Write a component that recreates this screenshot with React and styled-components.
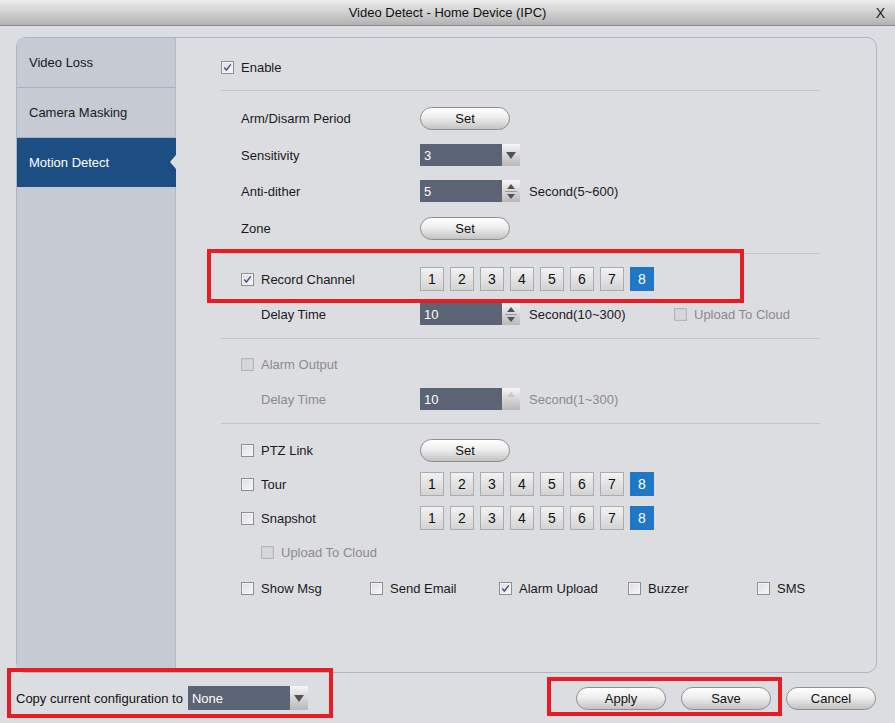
import React from "react";
import styled, { createGlobalStyle } from "styled-components";

const GlobalStyle = createGlobalStyle`
  html, body {
    margin: 0;
    padding: 0;
    background: #dcdde1;
  }
  * {
    box-sizing: border-box;
  }
  body {
    font-family: "Liberation Sans", Arial, sans-serif;
    font-size: 13px;
    color: #1a1a1a;
  }
`;

const Window = styled.div`
  position: relative;
  width: 895px;
  height: 723px;
  display: flex;
  flex-direction: column;
  background: #dcdde1;
  overflow: hidden;
`;

const TitleBar = styled.div`
  height: 26px;
  display: grid;
  grid-template-columns: 1fr auto 1fr;
  align-items: center;
  background: linear-gradient(#ececec, #b3b3b3);
  border-bottom: 1px solid #8c8c8c;
`;

const Title = styled.div`
  grid-column: 2;
  font-size: 13px;
  color: #111;
`;

const Close = styled.div`
  justify-self: end;
  padding-right: 10px;
  font-size: 14px;
  color: #222;
`;

const Body = styled.div`
  padding: 11px 18px 0 16px;
`;

const Panel = styled.div`
  display: flex;
  height: 636px;
  border: 1px solid #aeb5c3;
  border-radius: 10px;
  overflow: hidden;
  background: #dcdde1;
`;

const Sidebar = styled.div`
  width: 159px;
  flex-shrink: 0;
  background: #c5cad3;
  border-right: 1px solid #b3b9c5;
`;

const SideItem = styled.div`
  position: relative;
  height: ${(p) => (p.$active ? "49px" : "50px")};
  display: flex;
  align-items: center;
  padding-left: 12px;
  font-size: 13px;
  white-space: nowrap;
  color: ${(p) => (p.$active ? "#fff" : "#1a1a1a")};
  background: ${(p) => (p.$active ? "#1d4e83" : "transparent")};
  border-bottom: ${(p) => (p.$active ? "none" : "1px solid #aab0bc")};
  margin-right: ${(p) => (p.$active ? "-1px" : "0")};

  &::after {
    content: "";
    display: ${(p) => (p.$active ? "block" : "none")};
    position: absolute;
    right: 0;
    top: 17px;
    border-top: 7px solid transparent;
    border-bottom: 7px solid transparent;
    border-right: 6px solid #dcdde1;
  }
`;

const Content = styled.div`
  flex: 1;
  min-width: 0;
  padding: 17px 56px 0 45px;
`;

const Row = styled.div`
  height: 24px;
  margin-top: ${(p) => p.$mt || 0}px;
  display: flex;
  align-items: center;
  white-space: nowrap;
`;

const Divider = styled.div`
  height: 1px;
  margin-top: ${(p) => p.$mt || 0}px;
  background: #c3c4c8;
`;

const Label = styled.div`
  width: ${(p) => (p.$w !== undefined ? p.$w : 199)}px;
  flex-shrink: 0;
  padding-left: ${(p) => p.$indent || 0}px;
  display: flex;
  align-items: center;
  gap: 7px;
  color: ${(p) => (p.$disabled ? "#8b8b8b" : "#1a1a1a")};
`;

const CheckItem = styled.div`
  width: ${(p) => (p.$w ? `${p.$w}px` : "auto")};
  flex-shrink: 0;
  display: flex;
  align-items: center;
  gap: 7px;
  color: ${(p) => (p.$disabled ? "#8b8b8b" : "#1a1a1a")};
`;

const Box = styled.span`
  width: 13px;
  height: 13px;
  display: inline-flex;
  align-items: center;
  justify-content: center;
  flex-shrink: 0;
  border: 1px solid ${(p) => (p.$disabled ? "#b6b7ba" : "#8e8f92")};
  background: ${(p) =>
    p.$disabled
      ? "#d6d7da"
      : "linear-gradient(135deg, #dcdde0, #f8f8f8)"};
  box-shadow: inset 0 0 0 1px ${(p) => (p.$disabled ? "#cfd0d3" : "#f3f3f3")};
`;

const Checkbox = ({ checked, disabled }) => (
  <Box $disabled={disabled}>
    {checked && (
      <svg width="9" height="9" viewBox="0 0 9 9">
        <path
          d="M1.2 4.6 L3.4 7 L7.8 1.4"
          fill="none"
          stroke="#41559a"
          strokeWidth="1.5"
        />
      </svg>
    )}
  </Box>
);

const PillButton = styled.button`
  width: ${(p) => p.$w || 90}px;
  height: 23px;
  flex-shrink: 0;
  border: 1px solid #8e8e8e;
  border-radius: 12px;
  background: linear-gradient(#ffffff 0%, #eeeeee 45%, #c3c3c3 100%);
  font-family: "Liberation Sans", Arial, sans-serif;
  font-size: 13px;
  color: #111;
  padding: 0;
`;

const Field = styled.div`
  width: ${(p) => p.$w || 100}px;
  height: ${(p) => p.$h || 22}px;
  flex-shrink: 0;
  display: flex;
  background: #5b6475;
`;

const FieldText = styled.div`
  flex: 1;
  display: flex;
  align-items: center;
  padding-left: 4px;
  color: #fff;
  font-size: 13px;
`;

const ArrowPart = styled.div`
  width: 18px;
  display: flex;
  flex-direction: column;
  align-items: center;
  justify-content: center;
  gap: ${(p) => p.$gap || 0}px;
  background: linear-gradient(#f5f5f5, #b8b8b8);
`;

const Down = styled.span`
  width: 0;
  height: 0;
  border-left: ${(p) => p.$s || 5}px solid transparent;
  border-right: ${(p) => p.$s || 5}px solid transparent;
  border-top: ${(p) => (p.$s ? p.$s + 1 : 7)}px solid
    ${(p) => (p.$disabled ? "#c9c9c9" : "#4f5358")};
`;

const Up = styled.span`
  width: 0;
  height: 0;
  border-left: 4px solid transparent;
  border-right: 4px solid transparent;
  border-bottom: 5px solid ${(p) => (p.$disabled ? "#c9c9c9" : "#4f5358")};
`;

const SpinSep = styled.span`
  width: 12px;
  height: 1px;
  background: ${(p) => (p.$disabled ? "#d4d4d4" : "#9a9a9a")};
`;

const Select = ({ value, w, h }) => (
  <Field $w={w} $h={h}>
    <FieldText>{value}</FieldText>
    <ArrowPart>
      <Down />
    </ArrowPart>
  </Field>
);

const Spinner = ({ value, disabled }) => (
  <Field $w={100}>
    <FieldText>{value}</FieldText>
    <ArrowPart $gap={2}>
      <Up $disabled={disabled} />
      <SpinSep $disabled={disabled} />
      <Down $s={4} $disabled={disabled} />
    </ArrowPart>
  </Field>
);

const Unit = styled.div`
  width: ${(p) => (p.$w ? `${p.$w}px` : "auto")};
  flex-shrink: 0;
  margin-left: 9px;
  color: ${(p) => (p.$disabled ? "#8b8b8b" : "#1a1a1a")};
`;

const Channels = styled.div`
  display: flex;
  gap: 6px;
`;

const Channel = styled.div`
  width: 24px;
  height: 24px;
  display: flex;
  align-items: center;
  justify-content: center;
  font-size: 14px;
  color: ${(p) => (p.$on ? "#fff" : "#111")};
  background: ${(p) =>
    p.$on ? "#1f77c6" : "linear-gradient(#f2f2f2, #d3d3d3)"};
  border: 1px solid ${(p) => (p.$on ? "#1f77c6" : "#acacac")};
`;

const ChannelSet = () => (
  <Channels>
    {[1, 2, 3, 4, 5, 6, 7, 8].map((n) => (
      <Channel key={n} $on={n === 8}>
        {n}
      </Channel>
    ))}
  </Channels>
);

const Footer = styled.div`
  flex: 1;
  display: flex;
  align-items: center;
  padding: 0 19px 0 16px;
`;

const CopyLabel = styled.div`
  margin-right: 5px;
  color: #111;
`;

const FooterButtons = styled.div`
  margin-left: auto;
  display: flex;
  gap: 15px;
`;

const Marker = styled.div`
  position: absolute;
  left: ${(p) => p.$x}px;
  top: ${(p) => p.$y}px;
  width: ${(p) => p.$w}px;
  height: ${(p) => p.$h}px;
  border: 4px solid #e81c24;
  pointer-events: none;
`;

const bottomChecks = [
  ["Show Msg", false],
  ["Send Email", false],
  ["Alarm Upload", true],
  ["Buzzer", false],
  ["SMS", false],
];

export default function App() {
  return (
    <Window>
      <GlobalStyle />
      <TitleBar>
        <Title>Video Detect - Home Device (IPC)</Title>
        <Close>X</Close>
      </TitleBar>

      <Body>
        <Panel>
          <Sidebar>
            <SideItem>Video Loss</SideItem>
            <SideItem>Camera Masking</SideItem>
            <SideItem $active>Motion Detect</SideItem>
          </Sidebar>

          <Content>
            <Row>
              <CheckItem>
                <Checkbox checked />
                Enable
              </CheckItem>
            </Row>
            <Divider $mt={11} />

            <Row $mt={15}>
              <Label $indent={20}>Arm/Disarm Period</Label>
              <PillButton>Set</PillButton>
            </Row>
            <Row $mt={13}>
              <Label $indent={20}>Sensitivity</Label>
              <Select value="3" />
            </Row>
            <Row $mt={12}>
              <Label $indent={20}>Anti-dither</Label>
              <Spinner value="5" />
              <Unit>Second(5~600)</Unit>
            </Row>
            <Row $mt={13}>
              <Label $indent={20}>Zone</Label>
              <PillButton>Set</PillButton>
            </Row>
            <Divider $mt={13} />

            <Row $mt={13}>
              <Label $indent={20}>
                <Checkbox checked />
                Record Channel
              </Label>
              <ChannelSet />
            </Row>
            <Row $mt={11}>
              <Label $indent={40}>Delay Time</Label>
              <Spinner value="10" />
              <Unit $w={145}>Second(10~300)</Unit>
              <CheckItem $disabled>
                <Checkbox disabled />
                Upload To Cloud
              </CheckItem>
            </Row>
            <Divider $mt={12} />

            <Row $mt={13}>
              <Label $indent={20} $disabled>
                <Checkbox disabled />
                Alarm Output
              </Label>
            </Row>
            <Row $mt={11}>
              <Label $indent={40} $disabled>
                Delay Time
              </Label>
              <Spinner value="10" disabled />
              <Unit $disabled>Second(1~300)</Unit>
            </Row>
            <Divider $mt={12} />

            <Row $mt={14}>
              <Label $indent={20}>
                <Checkbox />
                PTZ Link
              </Label>
              <PillButton>Set</PillButton>
            </Row>
            <Row $mt={10}>
              <Label $indent={20}>
                <Checkbox />
                Tour
              </Label>
              <ChannelSet />
            </Row>
            <Row $mt={10}>
              <Label $indent={20}>
                <Checkbox />
                Snapshot
              </Label>
              <ChannelSet />
            </Row>
            <Row $mt={10}>
              <Label $indent={40} $disabled>
                <Checkbox disabled />
                Upload To Cloud
              </Label>
            </Row>
            <Row $mt={12}>
              <Label $indent={20} $w={20} />
              {bottomChecks.map(([text, on]) => (
                <CheckItem key={text} $w={129}>
                  <Checkbox checked={on} />
                  {text}
                </CheckItem>
              ))}
            </Row>
          </Content>
        </Panel>
      </Body>

      <Footer>
        <CopyLabel>Copy current configuration to</CopyLabel>
        <Select value="None" w={120} h={24} />
        <FooterButtons>
          <PillButton>Apply</PillButton>
          <PillButton>Save</PillButton>
          <PillButton>Cancel</PillButton>
        </FooterButtons>
      </Footer>

      <Marker $x={207} $y={249} $w={537} $h={54} />
      <Marker $x={7} $y={668} $w={326} $h={50} />
      <Marker $x={547} $y={677} $w={235} $h={39} />
    </Window>
  );
}
